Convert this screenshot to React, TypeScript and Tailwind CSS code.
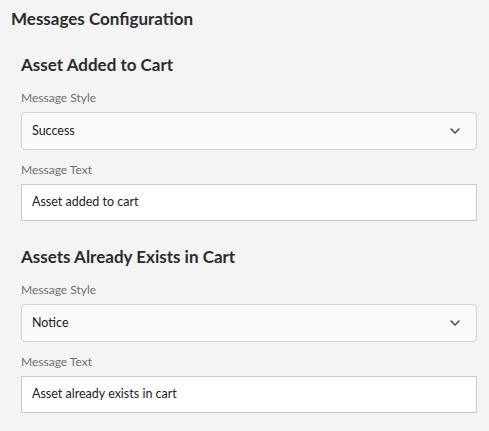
type Section = {
  title: string;
  style: string;
  text: string;
};

const sections: Section[] = [
  { title: "Asset Added to Cart", style: "Success", text: "Asset added to cart" },
  { title: "Assets Already Exists in Cart", style: "Notice", text: "Asset already exists in cart" },
];

function Chevron() {
  return (
    <svg width="10" height="6" viewBox="0 0 10 6" fill="none" className="text-[#4b4b4b]">
      <path d="M1 1l4 4 4-4" stroke="currentColor" strokeWidth="1.5" strokeLinecap="round" strokeLinejoin="round" />
    </svg>
  );
}

export default function App() {
  return (
    <div className="min-h-[431px] w-[489px] bg-[#f4f4f4] pl-[11px] pr-[12px] pt-[7px] text-[#2c2c2c] [font-family:Lato,sans-serif]">
      <h1 className="text-[17px] font-bold leading-[24px] text-[#2c2c2c]">Messages Configuration</h1>

      <div className="pl-[10px]">
        {sections.map((s, i) => (
          <section key={s.title} className={i === 0 ? "mt-[22px]" : "mt-[24px]"}>
            <h2 className="text-[17px] font-bold leading-[24px]">{s.title}</h2>
            <div className="mt-[12px] text-[12px] leading-[18px] text-[#6e6e6e]">Message Style</div>
            <div className="mt-[5px] flex h-[38px] items-center justify-between rounded-[4px] border border-[#d3d3d3] bg-[#fafafa] pl-[10px] pr-[16px]">
              <span className="text-[12.5px] text-[#222222]">{s.style}</span>
              <Chevron />
            </div>
            <div className="mt-[11px] text-[12px] leading-[18px] text-[#6e6e6e]">Message Text</div>
            <div className="mt-[5px] flex h-[37px] items-center border border-[#cacaca] bg-white pl-[10px]">
              <span className="text-[12.5px] text-[#222222]">{s.text}</span>
            </div>
          </section>
        ))}
      </div>
    </div>
  );
}
